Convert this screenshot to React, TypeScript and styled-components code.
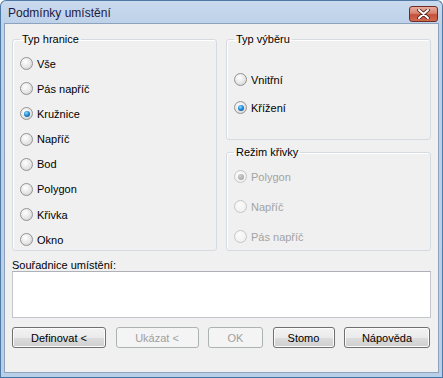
import styled, { createGlobalStyle } from 'styled-components';

const GlobalStyle = createGlobalStyle`
  html, body {
    margin: 0;
    padding: 0;
    background: #ffffff;
  }
  body {
    font-family: "Liberation Sans", Arial, sans-serif;
    font-size: 11px;
  }
`;

type RadioItem = { label: string; checked?: boolean };

const boundaryTypes: RadioItem[] = [
  { label: 'Vše' },
  { label: 'Pás napříč' },
  { label: 'Kružnice', checked: true },
  { label: 'Napříč' },
  { label: 'Bod' },
  { label: 'Polygon' },
  { label: 'Křivka' },
  { label: 'Okno' },
];

const selectTypes: RadioItem[] = [
  { label: 'Vnitřní' },
  { label: 'Křížení', checked: true },
];

const curveModes: RadioItem[] = [
  { label: 'Polygon', checked: true },
  { label: 'Napříč' },
  { label: 'Pás napříč' },
];

const buttons = [
  { label: 'Definovat <', width: 94 },
  { label: 'Ukázat <', width: 83, disabled: true },
  { label: 'OK', width: 55, disabled: true },
  { label: 'Stomo', width: 62 },
  { label: 'Nápověda', width: 86 },
];

const RadioList = ({
  items,
  disabled,
}: {
  items: RadioItem[];
  disabled?: boolean;
}) => (
  <>
    {items.map((item) => (
      <RadioRow key={item.label} $disabled={disabled}>
        <RadioDot $checked={item.checked} $disabled={disabled} />
        <span>{item.label}</span>
      </RadioRow>
    ))}
  </>
);

const App = () => {
  return (
    <>
      <GlobalStyle />
      <Window>
        <TitleBar>
          <Title>Podmínky umístění</Title>
          <CloseButton aria-label="Zavřít">
            <svg width="13" height="10" viewBox="0 0 13 10">
              <path
                d="M2 1 L11 9 M11 1 L2 9"
                stroke="#4a1a12"
                strokeWidth="3.6"
                strokeLinecap="round"
              />
              <path
                d="M2 1 L11 9 M11 1 L2 9"
                stroke="#ffffff"
                strokeWidth="2"
                strokeLinecap="round"
              />
            </svg>
          </CloseButton>
        </TitleBar>

        <Client>
          <Columns>
            <GroupBox>
              <Legend>Typ hranice</Legend>
              <BoundaryList>
                <RadioList items={boundaryTypes} />
              </BoundaryList>
            </GroupBox>

            <RightColumn>
              <GroupBox $height={107}>
                <Legend>Typ výběru</Legend>
                <SelectList>
                  <RadioList items={selectTypes} />
                </SelectList>
              </GroupBox>
              <GroupBox $height={105}>
                <Legend>Režim křivky</Legend>
                <CurveList>
                  <RadioList items={curveModes} disabled />
                </CurveList>
              </GroupBox>
            </RightColumn>
          </Columns>

          <FieldLabel>Souřadnice umístění:</FieldLabel>
          <CoordsBox />

          <ButtonRow>
            {buttons.map((b) => (
              <DialogButton key={b.label} $width={b.width} disabled={b.disabled}>
                {b.label}
              </DialogButton>
            ))}
          </ButtonRow>
        </Client>
      </Window>
    </>
  );
};

const Window = styled.div`
  width: 443px;
  height: 378px;
  box-sizing: border-box;
  display: flex;
  flex-direction: column;
  padding: 0 3px 4px 3px;
  border: 1px solid #4f7aa6;
  border-bottom-color: #3b74a8;
  border-radius: 6px 6px 0 0;
  background: linear-gradient(to bottom, #c9daee 0px, #bdd1e9 23px, #b9cee7 100%);
`;

const TitleBar = styled.div`
  height: 22px;
  flex: none;
  display: flex;
  align-items: center;
  justify-content: space-between;
  padding: 0 1px 0 4px;
`;

const Title = styled.span`
  font-size: 12px;
  color: #1e1a40;
  margin-top: 2px;
`;

const CloseButton = styled.div`
  width: 27px;
  height: 14px;
  margin-top: 3px;
  display: flex;
  align-items: center;
  justify-content: center;
  border: 1px solid #6e2c22;
  border-radius: 3px;
  background: linear-gradient(to bottom, #e6ad9e 0%, #d88270 45%, #c5503a 55%, #cf6a50 100%);
`;

const Client = styled.div`
  flex: 1;
  display: flex;
  flex-direction: column;
  background: #f0f0f0;
  border: 1px solid #8ca2bd;
  padding: 9px 7px 0 7px;
  color: #000000;
`;

const Columns = styled.div`
  display: flex;
  gap: 9px;
  height: 218px;
`;

const RightColumn = styled.div`
  display: flex;
  flex-direction: column;
  justify-content: space-between;
  width: 205px;
`;

const GroupBox = styled.fieldset<{ $height?: number }>`
  margin: 0;
  width: 205px;
  height: ${(p) => (p.$height ? `${p.$height}px` : '218px')};
  box-sizing: border-box;
  padding: 0 0 0 7px;
  border: 1px solid #d5dbe0;
  border-radius: 3px;
  box-shadow: inset 1px 1px 0 #ffffff;
`;

const Legend = styled.legend`
  padding: 0 2px;
  margin-left: 0px;
  line-height: 13px;
  color: #000000;
`;

const BoundaryList = styled.div`
  display: grid;
  grid-auto-rows: 25.2px;
  padding-top: 11px;
`;

const SelectList = styled.div`
  display: grid;
  grid-auto-rows: 28px;
  padding-top: 27px;
`;

const CurveList = styled.div`
  display: grid;
  grid-auto-rows: 30px;
  padding-top: 11px;
`;

const RadioRow = styled.div<{ $disabled?: boolean }>`
  display: flex;
  align-items: center;
  gap: 4px;
  height: 13px;
  color: ${(p) => (p.$disabled ? '#a3a3a3' : '#000000')};
`;

const RadioDot = styled.span<{ $checked?: boolean; $disabled?: boolean }>`
  position: relative;
  width: 13px;
  height: 13px;
  box-sizing: border-box;
  border-radius: 50%;
  border: 1px solid ${(p) => (p.$disabled ? '#c6c6c6' : '#939393')};
  background: ${(p) =>
    p.$disabled
      ? 'radial-gradient(circle at 40% 35%, #fbfbfb 0%, #ededed 100%)'
      : 'radial-gradient(circle at 40% 35%, #ffffff 0%, #e6e6e6 55%, #c8c8c8 100%)'};

  &::after {
    content: '';
    display: ${(p) => (p.$checked ? 'block' : 'none')};
    position: absolute;
    left: 2.5px;
    top: 2.5px;
    width: 6px;
    height: 6px;
    border-radius: 50%;
    background: ${(p) =>
      p.$disabled
        ? 'radial-gradient(circle at 40% 35%, #d0d0d0 0%, #9a9a9a 100%)'
        : 'radial-gradient(circle at 40% 35%, #8fdcff 0%, #1d84d0 50%, #0d3f7a 100%)'};
  }
`;

const FieldLabel = styled.div`
  margin-top: 8px;
  line-height: 13px;
`;

const CoordsBox = styled.div`
  height: 47px;
  box-sizing: border-box;
  margin-top: -1px;
  background: #ffffff;
  border: 1px solid #c2c6cc;
  border-top-color: #aeb2b8;
`;

const ButtonRow = styled.div`
  display: flex;
  justify-content: space-between;
  margin-top: 9px;
  padding-right: 1px;
`;

const DialogButton = styled.button<{ $width: number }>`
  width: ${(p) => p.$width}px;
  height: 21px;
  padding: 0;
  font-family: "Liberation Sans", Arial, sans-serif;
  font-size: 11px;
  color: #000000;
  border: 1px solid #707070;
  border-radius: 3px;
  background: linear-gradient(to bottom, #f2f2f2 0%, #ebebeb 50%, #dddddd 51%, #cfcfcf 100%);
  box-shadow: inset 0 0 0 1px #fbfbfb;

  &:disabled {
    color: #a0a0a0;
    border-color: #adb2b5;
    background: #f4f4f4;
    box-shadow: none;
  }
`;

export default App;
